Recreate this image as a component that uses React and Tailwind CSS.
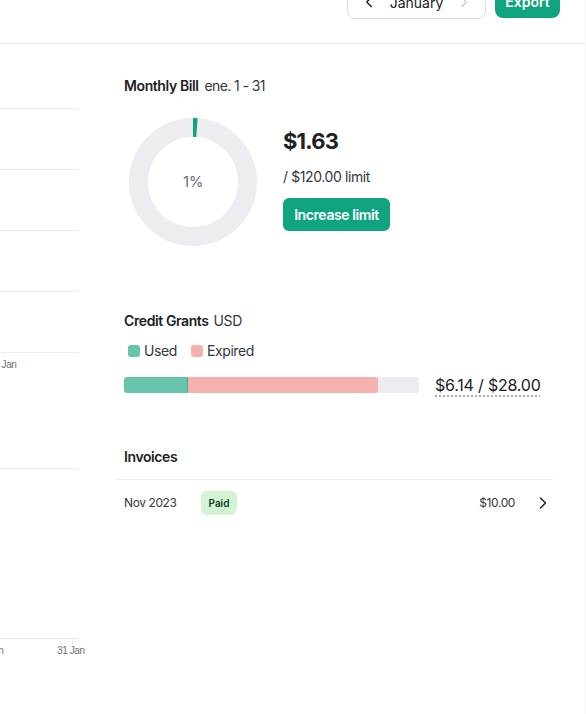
import { ChevronLeft, ChevronRight } from "lucide-react";

const font = { fontFamily: "Inter, 'Noto Sans', sans-serif" };

function UsageCharts() {
  const lines = [64, 125, 186, 247, 308];
  return (
    <svg width="86" height="670" className="shrink-0 block">
      {lines.map((y) => (
        <line key={y} x1="0" x2="79" y1={y + 0.5} y2={y + 0.5} stroke="#ececf1" strokeWidth="1" />
      ))}
      <line x1="3.5" x2="3.5" y1="308" y2="314" stroke="#ececf1" />
      <text x="-6" y="324" fontSize="10" fill="#6e6e80" fontFamily="'Liberation Sans', Arial, sans-serif">1 Jan</text>

      <line x1="0" x2="79" y1="424.5" y2="424.5" stroke="#ececf1" />
      <line x1="0" x2="79" y1="594.5" y2="594.5" stroke="#ececf1" />
      <line x1="72.5" x2="72.5" y1="594" y2="601" stroke="#ececf1" />
      <text x="3.5" y="610" fontSize="10" textAnchor="end" fill="#6e6e80" fontFamily="'Liberation Sans', Arial, sans-serif">16 Jan</text>
      <text x="57" y="610" fontSize="10" fill="#6e6e80" fontFamily="'Liberation Sans', Arial, sans-serif">31 Jan</text>
    </svg>
  );
}

function Donut() {
  return (
    <div className="relative w-[128px] h-[128px] shrink-0">
      <svg width="128" height="128" viewBox="0 0 128 128" className="block">
        <circle cx="64" cy="64" r="54.5" fill="none" stroke="#ececf1" strokeWidth="19" />
        <circle
          cx="64" cy="64" r="54.5" fill="none" stroke="#10a37f" strokeWidth="19"
          strokeDasharray="4 400" transform="rotate(-90 64 64)"
        />
      </svg>
      <div className="absolute inset-0 flex items-center justify-center text-[15px] text-[#6e6e80] tracking-[-0.5px]">1%</div>
    </div>
  );
}

export default function App() {
  return (
    <div className="w-[586px] h-[714px] overflow-hidden bg-white flex text-[#202123] tracking-[-0.4px]" style={font}>
      <div className="flex-1 -mt-[15px]">
        {/* Header */}
        <div className="h-[59px] border-b border-[#ececf1] flex items-start justify-end gap-[9px] pr-[25px]">
          <div className="h-[34px] w-[139px] rounded-lg border border-[#d9d9e3] flex items-center justify-between px-[12px] text-[14px] tracking-normal">
            <ChevronLeft size={18} strokeWidth={2} className="text-[#202123]" />
            <span>January</span>
            <ChevronRight size={18} strokeWidth={1.5} className="text-[#c5c5d2]" />
          </div>
          <div className="h-[33px] w-[65px] rounded-lg bg-[#10a37f] text-white text-[14px] font-semibold flex items-center justify-center tracking-normal">
            Export
          </div>
        </div>

        {/* Body */}
        <div className="flex">
          <UsageCharts />
          <div className="ml-[30px] w-[437px]">
            <div className="px-2 pt-[32px]">
              <div className="flex items-baseline gap-[6px] text-[14px] leading-[20px]">
                <span className="font-semibold">Monthly Bill</span>
                <span className="text-[#353740] tracking-[-0.6px]">ene. 1 - 31</span>
              </div>

              <div className="flex items-start mt-[22px]">
                <div className="ml-[5px]">
                  <Donut />
                </div>
                <div className="ml-[26px] mt-[8px] flex flex-col items-start">
                  <div className="text-[22px] leading-[30px] font-bold tracking-[-0.8px]">$1.63</div>
                  <div className="mt-[11px] text-[14px] leading-[20px] text-[#353740]">/ $120.00 limit</div>
                  <button className="mt-[11px] h-[33px] w-[107px] rounded-md bg-[#10a37f] text-white text-[14px] font-semibold">
                    Increase limit
                  </button>
                </div>
              </div>

              <div className="mt-[65px] flex items-baseline gap-[5px] text-[14px] leading-[20px]">
                <span className="font-semibold">Credit Grants</span>
                <span className="text-[#353740]">USD</span>
              </div>

              <div className="mt-[10px] flex items-center text-[14px] leading-[20px] text-[#353740] pl-[4px]">
                <span className="w-[12px] h-[12px] rounded-[3px] bg-[#67c5ad]" />
                <span className="ml-[4px]">Used</span>
                <span className="ml-[14px] w-[12px] h-[12px] rounded-[3px] bg-[#f5b0b0]" />
                <span className="ml-[4px]">Expired</span>
              </div>

              <div className="mt-[12px] h-[24px] flex items-center">
                <div className="w-[295px] h-[16px] rounded-[3px] bg-[#ececf1] flex overflow-hidden">
                  <div className="w-[64px] bg-[#67c5ad] border-r border-[#3fae8f]" />
                  <div className="w-[190px] bg-[#f5b0b0] rounded-r-[3px]" />
                </div>
                <span className="ml-[16px] text-[16px] leading-[24px] tracking-[-0.2px] underline decoration-dotted decoration-[#8e8ea0] underline-offset-[5px]">
                  $6.14 / $28.00
                </span>
              </div>
            </div>

            <div className="mt-[50px] px-2 pb-[12px] text-[14px] leading-[20px] font-semibold">
              Invoices
            </div>
            <div className="border-t border-[#ececf1] flex items-center py-[11px] pl-2 text-[12px] text-[#353740]">
              <span className="w-[77px]">Nov 2023</span>
              <span className="h-[24px] w-[36px] rounded-md bg-[#d2f4d3] text-[#0b3d24] text-[10px] font-semibold flex items-center justify-center tracking-normal">
                Paid
              </span>
              <span className="ml-auto">$10.00</span>
              <ChevronRight size={20} strokeWidth={1.75} className="ml-[18px] text-[#202123]" />
            </div>
          </div>
        </div>
      </div>
      <div className="w-px h-full bg-[#f4f4f6]" />
    </div>
  );
}
